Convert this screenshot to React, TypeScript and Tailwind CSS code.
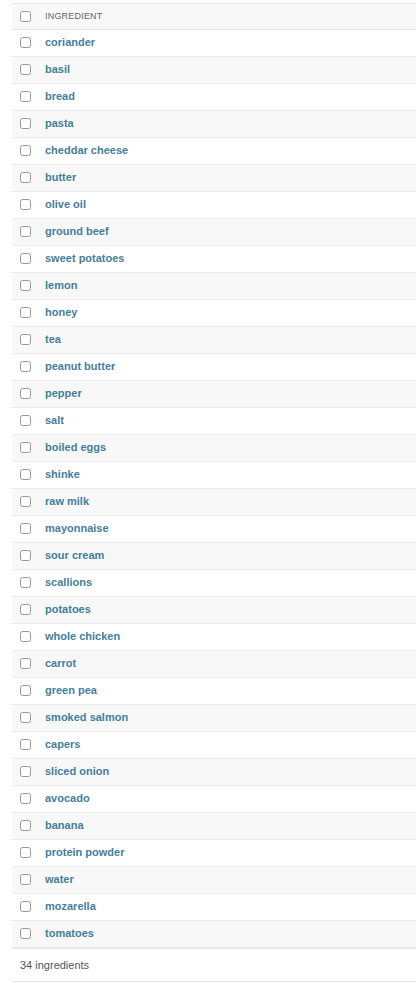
import React from "react";

const ingredients = [
  "coriander",
  "basil",
  "bread",
  "pasta",
  "cheddar cheese",
  "butter",
  "olive oil",
  "ground beef",
  "sweet potatoes",
  "lemon",
  "honey",
  "tea",
  "peanut butter",
  "pepper",
  "salt",
  "boiled eggs",
  "shinke",
  "raw milk",
  "mayonnaise",
  "sour cream",
  "scallions",
  "potatoes",
  "whole chicken",
  "carrot",
  "green pea",
  "smoked salmon",
  "capers",
  "sliced onion",
  "avocado",
  "banana",
  "protein powder",
  "water",
  "mozarella",
  "tomatoes",
];

const Box = () => (
  <span className="block w-[11px] h-[11px] rounded-[2.5px] border border-[#9a9a9a] bg-white" />
);

const App = () => {
  return (
    <div className="min-h-screen bg-white pl-3 pt-[3px] font-['Liberation_Sans',Arial,sans-serif]">
      <div className="flex items-center h-[27px] bg-[#f8f8f8] border-y border-[#e6e6e6]">
        <div className="w-[33px] pl-2 pb-[1px]">
          <Box />
        </div>
        <span className="text-[9px] tracking-[0.2px] text-[#666] uppercase">Ingredient</span>
      </div>

      {ingredients.map((name, i) => (
        <div
          key={name}
          className={
            "flex items-center h-[27px] pb-[2px] border-b border-[#ebebeb] " +
            (i % 2 === 1 ? "bg-[#f8f8f8]" : "bg-white")
          }
        >
          <div className="w-[33px] pl-2">
            <Box />
          </div>
          <a className="text-[11px] font-bold text-[#447e9b]">{name}</a>
        </div>
      ))}

      <div className="border-t border-[#e6e6e6]" />
      <div className="flex items-center h-[33px] pl-2 border-b border-[#e6e6e6] text-[11px] text-[#555]">
        34 ingredients
      </div>
    </div>
  );
};

export default App;
